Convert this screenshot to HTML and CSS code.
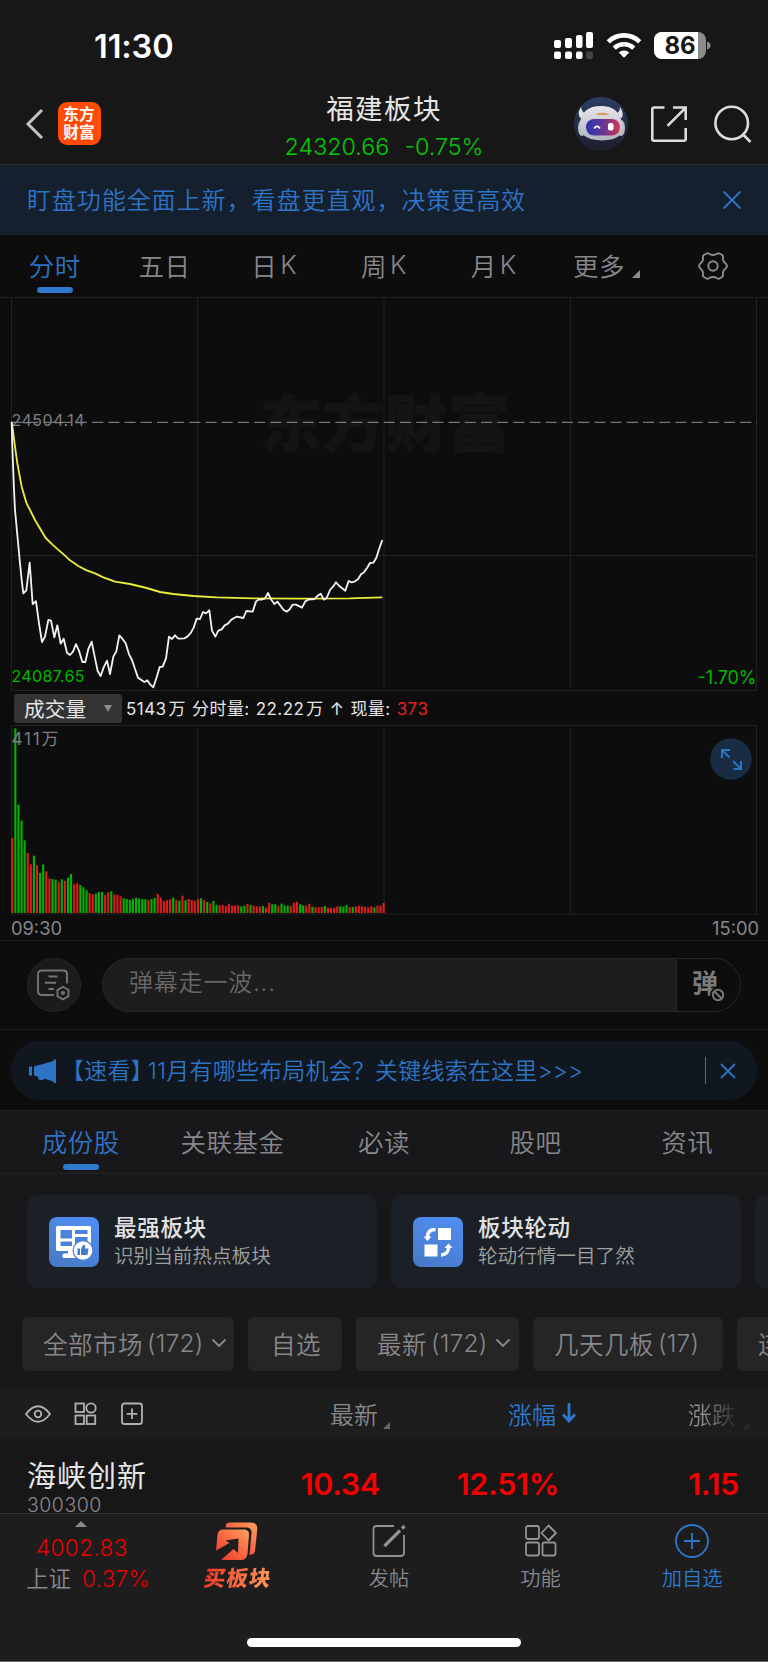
FILE: index.html
```html
<!DOCTYPE html>
<html lang="zh-CN">
<head>
<meta charset="utf-8">
<title>福建板块</title>
<link rel="stylesheet" href="styles.css">
</head>
<body>
<header class="header">
  <div class="status">
    <span class="clock">11:30</span>
    <svg class="status-icons" width="160" height="30" viewBox="0 0 160 30">
      <g fill="#fff">
        <rect x="1" y="9" width="7" height="8" rx="2"/><rect x="12" y="7" width="7" height="10" rx="2"/><rect x="23" y="4" width="6.500" height="13" rx="2"/><rect x="33" y="1" width="7" height="16" rx="2"/>
        <rect x="1" y="20.500" width="7" height="7.500" rx="2"/><rect x="12" y="20.500" width="7" height="7.500" rx="2"/><rect x="23" y="20.500" width="6.500" height="7.500" rx="2"/>
      </g>
      <rect x="33" y="20.500" width="7" height="7.500" rx="2" fill="#444"/>
      <g fill="none" stroke="#fff" stroke-width="4.600"><path d="M55.300 10.800A22.500 22.500 0 0 1 86.700 10.800"/><path d="M61.200 17.200A14 14 0 0 1 80.800 17.200"/></g>
      <path d="M71 26.800L65.800 21.600A7.400 7.400 0 0 1 76.200 21.600Z" fill="#fff"/>
      <rect x="101" y="1" width="52" height="27" rx="8" fill="#8b8b8b"/>
      <path d="M109 1H145V28H109A8 8 0 0 1 101 20V9A8 8 0 0 1 109 1Z" fill="#fff"/>
      <path d="M154 10.500Q157.500 11.500 157.500 14.500T154 18.500Z" fill="#8b8b8b"/>
      <text x="111.500" y="22.500" class="battery-text" textLength="31">86</text>
    </svg>
  </div>
  <div class="nav">
    <div class="nav-left">
      <svg width="20" height="34" viewBox="0 0 20 34"><path d="M17 3L3 17L17 31" fill="none" stroke="#c4c4c4" stroke-width="3"/></svg>
      <div class="logo"><span>东方</span><span>财富</span></div>
    </div>
    <div class="nav-title">
      <h1>福建板块</h1>
      <p><span>24320.66</span><span>-0.75%</span></p>
    </div>
    <div class="nav-right">
      <svg width="54" height="54" viewBox="0 0 54 54">
        <defs>
          <linearGradient id="bot-bg" x1="0" y1="0" x2="0" y2="1"><stop offset="0" stop-color="#2d3d62"/><stop offset="1" stop-color="#1b1f29"/></linearGradient>
          <linearGradient id="bot-head" x1="0" y1="0" x2="0" y2="1"><stop offset="0" stop-color="#e6e7eb"/><stop offset="1" stop-color="#b2b4bd"/></linearGradient>
          <linearGradient id="bot-face" x1="0" y1="0" x2="1" y2="0"><stop offset="0" stop-color="#2b36ad"/><stop offset=".5" stop-color="#663495"/><stop offset="1" stop-color="#d23a55"/></linearGradient>
        </defs>
        <circle cx="27" cy="27" r="27" fill="url(#bot-bg)"/>
        <path d="M7 10Q3 16 6 21L14 18Q8 16 7 10ZM46 10Q50 16 48 21L40 18Q46 16 46 10Z" fill="#e0e0e5"/>
        <ellipse cx="8" cy="31" rx="4" ry="8" fill="#b9bbc5"/><ellipse cx="47" cy="31" rx="4" ry="8" fill="#b9bbc5"/>
        <path d="M6 26Q8 9 27 9Q45 9 48 26Q52 43 28 43.500Q4 43 6 26Z" fill="url(#bot-head)"/>
        <path d="M22 17Q28 14.500 35 17L34 18H23Z" fill="#d79a5e"/>
        <rect x="12" y="22" width="34" height="16.500" rx="8" fill="url(#bot-face)"/>
        <path d="M20 31.500Q23 27 26 31.500" fill="none" stroke="#eee" stroke-width="1.800"/>
        <rect x="34" y="26" width="5.500" height="7.500" rx="2" fill="#fff"/>
      </svg>
      <svg width="38" height="38" viewBox="0 0 38 38" fill="none" stroke="#dcdcdc" stroke-width="2.600"><path d="M14.500 2.500H4Q2.300 2.500 2.300 4V34Q2.300 35.700 4 35.700H34Q35.700 35.700 35.700 34V23M23 2.500H35.700V15M35.500 2.800L17.500 20.800"/></svg>
      <svg width="39" height="39" viewBox="0 0 39 39" fill="none" stroke="#dcdcdc" stroke-width="2.600"><circle cx="18.700" cy="18" r="16.300"/><path d="M29.500 29L37.500 37"/></svg>
    </div>
  </div>
</header>

<div class="notice"><span>盯盘功能全面上新，看盘更直观，决策更高效</span>
  <svg width="20" height="20" viewBox="0 0 20 20"><path d="M1.500 1.500L18.500 18.500M18.500 1.500L1.500 18.500" stroke="#2e74c6" stroke-width="1.800"/></svg>
</div>

<nav class="periods">
  <span class="active">分时</span><span>五日</span><span>日<em>K</em></span><span>周<em>K</em></span><span>月<em>K</em></span>
  <span class="more">更多<i class="corner"></i></span>
  <span class="gear"><svg width="32" height="32" viewBox="0 0 32 32" fill="none" stroke="#8b8b91" stroke-width="1.900"><circle cx="16" cy="16" r="4.700"/><path d="M10 3.300C11.500 2.500 12 5 16 5S20.500 2.500 22 3.300L25.500 5.300C27 6.500 25 8.500 26.500 11S30 14 30 16S28 18.500 26.500 21S27 25.500 25.500 26.700L22 28.700C20.500 29.500 20 27 16 27S11.500 29.500 10 28.700L6.500 26.700C5 25.500 7 23.500 5.500 21S2 18 2 16S4 13.500 5.500 11S5 6.500 6.500 5.300Z"/></svg></span>
</nav>

<section class="charts">
  <svg class="price" width="768" height="394" viewBox="0 0 768 394">
    <text class="watermark" x="260" y="150" textLength="250">东方财富</text>
    <path class="grid" d="M0 .5H768M11.500 0V394M197.500 0V391M384 0V391M570.500 0V391M756.500 0V394M11 258.500H757M11 393.500H757"/>
    <path d="M11 125.300H757" stroke="#77757e" stroke-width="1.300" stroke-dasharray="11 5.200" stroke-dashoffset="16"/>
    <text x="11.500" y="129" class="axis" textLength="73">24504.14</text>
    <text x="11.500" y="385" class="axis down" textLength="73">24087.65</text>
    <text x="697.500" y="387" class="axis down big" textLength="59">-1.70%</text>
    <g transform="translate(0 -7) scale(.33333)" fill="none" stroke-width="5.500" stroke-linejoin="round">
      <path stroke="#ecec3c" d="M36 400L45 470L52 520L65 590L79 638L105 690L117 710L137 744L160 766L195 797L210 811L235 828L260 841L285 850L310 862L345 875L390 882L440 894L480 906L520 912L580 918L650 922L760 925L900 926L1050 925L1147 922"/>
      <path stroke="#f2f2f2" d="M35 395L37 470L42 600L45 660L52 735L60 820L65 870L70 910L79 901L89 818L98 942L108 934L117 1000L126 1056L135 1040L145 990L153 992L163 1042L172 1006L182 1061L191 1046L201 1088L210 1095L219 1085L228 1062L238 1085L247 1116L256 1116L265 1077L275 1055L284 1100L293 1143L302 1158L311 1132L321 1112L330 1152L340 1100L349 1084L358 1036L367 1046L377 1060L387 1093L396 1110L405 1137L414 1163L423 1169L433 1176L442 1171L451 1184L460 1192L470 1162L479 1131L488 1130L498 1105L507 1040L516 1047L525 1036L535 1046L553 1045L562 1040L572 1029L581 1013L590 986L600 987L609 966L618 970L628 961L636 1022L646 1040L655 1022L665 1018L674 1006L684 1001L693 990L702 984L711 980L730 984L739 963L758 965L768 935L776 928L785 929L795 925L804 909L813 928L823 942L832 935L842 948L851 960L860 965L869 958L878 944L888 944L906 953L916 934L925 929L944 927L953 917L962 911L971 929L980 924L990 900L999 890L1008 877L1017 887L1036 902L1046 873L1055 877L1065 874L1074 868L1083 853L1092 847L1101 834L1110 819L1120 818L1129 803L1138 775L1147 750"/>
    </g>
  </svg>
  <div class="volume-head">
    <div class="select">成交量<i></i></div>
    <p><span>5143<em>万</em></span><span>分时量:</span><span>22.22<em>万</em></span><span>↑</span><span>现量:</span><b>373</b></p>
  </div>
  <div class="volume">
    <svg width="768" height="190" viewBox="0 0 768 190">
      <path class="grid" d="M11 .5H757M11.500 0V190M197.500 3V188M384 3V188M570.500 3V188M756.500 0V190M11 189H757"/>
      <g id="bars"></g>
      <text x="11.500" y="20" class="axis vol" textLength="47">411万</text>
    </svg>
    <svg class="expand" width="42" height="42" viewBox="0 0 42 42"><circle cx="21" cy="21" r="20.800" fill="#182c44"/><path d="M20 12H12V20M12 12L19.500 19.500M23.500 31H31V23M31 31L23 23" fill="none" stroke="#2c74c8" stroke-width="2"/></svg>
  </div>
  <div class="times"><span>09:30</span><span>15:00</span></div>
</section>

<section class="comment">
  <div class="round"><svg width="36" height="34" viewBox="0 0 36 34" fill="none" stroke="#747474" stroke-width="1.900"><path d="M18 27H6Q2 27 2 23V6Q2 2.500 6 2.500H27Q31 2.500 31 6V15.500M12.500 8.500H21.500M9 14.800H20M12.500 21H18"/><path d="M27 18.800L32.500 22V28.200L27 31.400L21.500 28.200V22Z"/><circle cx="27" cy="25" r="1.100" fill="#747474"/></svg></div>
  <div class="input"><span>弹幕走一波...</span><div class="bullet">弹<svg width="16" height="16" viewBox="0 0 16 16"><circle cx="8" cy="8" r="8" fill="#0d0d0d"/><circle cx="8" cy="8" r="5.200" fill="none" stroke="#797979" stroke-width="2"/><path d="M4.500 4.500L11.500 11.500" stroke="#797979" stroke-width="1.900"/></svg></div></div>
</section>

<section class="news"><div class="news-pill">
  <svg width="28" height="26" viewBox="0 0 28 26" fill="#2e74c6"><path d="M0 8.500H3V17.500H0ZM5 8.500L24.500 3V1.500H27V25H24.500V23.500L15 20.500Q14.500 22.500 12.500 22H10.500Q9 21.500 9 18.500L5 17.500Z"/></svg>
  <span><em>【速看】</em>11月有哪些布局机会？关键线索在这里&gt;&gt;&gt;</span>
  <i></i>
  <svg class="x" width="16" height="16" viewBox="0 0 16 16"><path d="M1 1L15 15M15 1L1 15" stroke="#2e74c6" stroke-width="1.800"/></svg>
</div></section>

<main class="list">
  <nav class="tabs"><span class="active">成份股</span><span>关联基金</span><span>必读</span><span>股吧</span><span>资讯</span></nav>
  <div class="cards">
    <article class="card">
      <svg width="50" height="50" viewBox="0 0 50 50"><defs><linearGradient id="tile" x1=".7" y1="0" x2=".3" y2="1"><stop offset="0" stop-color="#4f8df0"/><stop offset="1" stop-color="#477bc9"/></linearGradient></defs><rect width="50" height="50" rx="8" fill="url(#tile)"/><rect x="7" y="9" width="35" height="25" rx="1.500" fill="#fff"/><path d="M11.500 13H23V21.500H11.500ZM26 13H38.500V17H26ZM26 20H38.500V28H26ZM11.500 24.500H23V29H11.500Z" fill="#4a83dc"/><path d="M19 34H26V37H19Z" fill="#fff"/><rect x="13.500" y="36.500" width="17" height="4.500" rx="1.500" fill="#fff"/><circle cx="34" cy="33.500" r="10.500" fill="#4a83dc"/><circle cx="34" cy="33.500" r="9.300" fill="#fff"/><path d="M28.500 31.500H31V38H28.500ZM32 31.500L34.500 27.500Q37 28 36 31.500H39.500L38.500 38H32Z" fill="#447bd3"/></svg>
      <div><h2>最强板块</h2><p>识别当前热点板块</p></div>
    </article>
    <article class="card">
      <svg width="50" height="50" viewBox="0 0 50 50"><rect width="50" height="50" rx="8" fill="url(#tile)"/><path d="M25 11H38V23H25ZM11.500 27.500H24.500V39.500H11.500Z" fill="#fff"/><path d="M22.500 12.500Q14.500 12.500 14.500 20M28 38Q35.500 37.500 35.500 30" fill="none" stroke="#fff" stroke-width="3.300"/><path d="M10.500 19.500H18.500L14.500 24ZM31.500 31H39.500L35.500 26.500Z" fill="#fff"/></svg>
      <div><h2>板块轮动</h2><p>轮动行情一目了然</p></div>
    </article>
    <article class="card"></article>
  </div>
  <div class="chips">
    <span class="chip wide">全部市场<em>(172)</em><svg width="16" height="10" viewBox="0 0 16 10"><path d="M1.500 1.500L8 8L14.500 1.500"/></svg></span>
    <span class="chip own">自选</span>
    <span class="chip latest">最新<em>(172)</em><svg width="16" height="10" viewBox="0 0 16 10"><path d="M1.500 1.500L8 8L14.500 1.500"/></svg></span>
    <span class="chip boards">几天几板<em>(17)</em></span>
    <span class="chip last">连</span>
  </div>
  <div class="thead">
    <div class="tools">
      <svg width="26" height="24" viewBox="0 0 26 24"><path d="M1 12Q13-3.500 25 12Q13 27.500 1 12Z"/><circle cx="13" cy="12" r="3.300"/></svg>
      <svg width="23" height="24" viewBox="0 0 23 24"><rect x="1.500" y="1.500" width="8.500" height="8.500"/><circle cx="17" cy="6" r="4.700"/><rect x="1.500" y="13.500" width="8.500" height="8.500"/><rect x="12.700" y="13.500" width="8.500" height="8.500"/></svg>
      <svg width="24" height="24" viewBox="0 0 24 24"><rect x="2" y="1.500" width="20" height="20.500" rx="2.500"/><path d="M12 6.500V17M6.700 11.800H17.300"/></svg>
    </div>
    <span class="h1">最新<i class="corner small"></i></span>
    <span class="h2">涨幅<svg width="14" height="20" viewBox="0 0 14 20"><path d="M7 0V16M1 11.500L7 18L13 11.500" fill="none" stroke="#2e78cd" stroke-width="2.800"/></svg></span>
    <span class="h3">涨跌</span><i class="corner small faint"></i>
  </div>
  <div class="row">
    <div class="stock"><b>海峡创新</b><small>300300</small></div>
    <span class="n">10.34</span><span class="n">12.51%</span><span class="n">1.15</span>
  </div>
</main>

<footer class="bottom">
  <div class="actions">
    <div class="index"><i></i><b>4002.83</b><p>上证<span>0.37%</span></p></div>
    <div class="buy">
      <svg width="44" height="40" viewBox="0 0 44 40"><defs><linearGradient id="hot" x1="0" y1="1" x2="1" y2="0"><stop offset="0" stop-color="#ee3028"/><stop offset="1" stop-color="#ffa15c"/></linearGradient></defs><path d="M11 4Q11.500 1.500 15 1.500H36Q42.500 1.500 42.300 8L40 30Q39.500 33.500 34.500 34L36.500 12Q37 6.500 31 6.500H11Q10.500 6.500 11 4Z" fill="url(#hot)"/><path d="M8 8.500H28.500Q34.500 8.500 34 14L32.500 33Q31.500 39 26 39H6L18.500 28L23 32L23.500 17.500L10.500 19.500L14.500 22L1 29.500L2.500 14Q3 8.500 8 8.500Z" fill="url(#hot)"/></svg>
      <span>买板块</span>
    </div>
    <div><svg width="34" height="34" viewBox="0 0 34 34"><path d="M22 2H4.500Q1.500 2 1.500 5V29Q1.500 32 4.500 32H28.500Q32 32 32 29V11"/><path d="M12.500 22L28 6.500M30 4.500L32.500 2" stroke-width="3.200"/></svg><span>发帖</span></div>
    <div><svg width="34" height="34" viewBox="0 0 34 34"><rect x="2" y="2" width="13" height="13" rx="2"/><path d="M24.500 1.500L32 9L24.500 16.500L17.500 9Z" stroke-linejoin="round"/><rect x="2" y="18.500" width="13" height="13" rx="2"/><rect x="18.500" y="18.500" width="13" height="13" rx="2"/></svg><span>功能</span></div>
    <div class="add"><svg width="34" height="34" viewBox="0 0 34 34"><circle cx="17" cy="17" r="16"/><path d="M17 9V25M9 17H25"/></svg><span>加自选</span></div>
  </div>
  <div class="home"></div>
</footer>
<script src="chart.js"></script>
</body>
</html>
```
FILE: styles.css
```css
* { box-sizing: border-box; }
body { margin: 0; width: 768px; height: 1662px; overflow: hidden; background: #0d0d0d; color: #87878d; font-family: Inter, "Noto Sans CJK SC", sans-serif; font-weight: 350; display: flex; flex-direction: column; }
h1, h2, p { margin: 0; font-weight: 350; }
i, em { font-style: normal; }
svg { display: block; flex: none; }
span, b, small { white-space: nowrap; }

.header { height: 165px; background: #171717; border-bottom: 1px solid #2a2a2a; }
.status { height: 90px; display: flex; justify-content: space-between; padding: 29px 55px 0 94px; }
.clock { color: #fff; font-weight: 600; font-size: 32.500px; line-height: 36px; letter-spacing: -.1px; }
.status-icons { margin-top: 2px; }
.battery-text { font-size: 24px; font-weight: 700; fill: #171717; }
.nav { height: 74px; display: grid; grid-template-columns: 1fr 240px 1fr; }
.nav-left { display: flex; align-items: center; gap: 12.500px; padding: 0 0 7px 25px; }
.logo { width: 43px; height: 43px; border-radius: 9px; background: #ff4b05; color: #fff; display: flex; flex-direction: column; align-items: center; justify-content: center; font-size: 15.700px; line-height: 17.500px; font-weight: 700; }
.nav-title { text-align: center; padding-top: 1px; }
.nav-title h1 { font-size: 27.500px; letter-spacing: 1.400px; line-height: 36px; color: #e6e6e6; font-weight: 400; }
.nav-title p { display: flex; justify-content: center; gap: 15px; font-size: 23.300px; line-height: 30px; margin-top: 5px; color: #00cb00; }
.nav-right { display: flex; align-items: flex-start; gap: 22px; padding: 7px 0 0 70px; }
.nav-right svg + svg { margin-top: 8px; }
.nav-right svg:last-child { margin-left: 3px; }

.notice { height: 70px; padding: 0 26px 0 27px; background: #15202e; display: flex; align-items: center; justify-content: space-between; color: #2e74c6; font-size: 23.800px; letter-spacing: 1.170px; }
.notice span { padding-bottom: 3px; }

.periods { height: 62px; display: grid; grid-template-columns: repeat(7, 1fr); font-size: 25.500px; }
.periods > span, .tabs > span { position: relative; display: flex; align-items: center; justify-content: center; letter-spacing: .500px; padding-bottom: 4px; }
.periods .gear { padding-bottom: 1px; }
.periods em { margin-left: 3px; }
.active { color: #2e74c6; }
.active::after { content: ""; position: absolute; left: 50%; bottom: 4px; width: 36px; height: 6px; margin-left: -18px; border-radius: 3px; background: #2e78cd; }
.periods .more { gap: 7px; padding-left: 6px; }
.corner { width: 0; height: 0; border-left: 8px solid transparent; border-bottom: 8px solid #8b8b91; margin-top: 20px; }
.corner.small { border-left-width: 7px; border-bottom-width: 7px; border-bottom-color: #666; margin-top: 24px; }
.corner.faint { border-bottom-color: #292929; margin-left: 6px; }

.charts { height: 644px; border-bottom: 1px solid #1c1c1c; }
.grid { fill: none; stroke: #212121; stroke-width: 1; }
.axis { font-size: 16px; fill: #7d7d82; font-weight: 400; }
.axis.vol { font-size: 17px; }
.axis.big { font-size: 18px; }
.axis.down { fill: #00b800; }
.watermark { font-size: 62px; font-weight: 900; fill: #141414; stroke: #141414; stroke-width: 1; }
.volume-head { height: 34px; display: flex; align-items: center; padding: 1px 0 0 14px; color: #e5e5e5; font-weight: 400; }
.select { width: 108px; height: 29px; background: #333; border-radius: 3px; display: flex; align-items: center; justify-content: space-between; padding: 0 10px 1px 10px; font-size: 20.700px; }
.select i { border: 4px solid transparent; border-top: 7px solid #8b8b91; border-bottom: 0; }
.volume-head p { display: flex; align-items: center; font-size: 17px; letter-spacing: .450px; line-height: 30px; margin-left: 4px; gap: 6px; font-weight: 400; }
.volume-head em { margin-left: 2px; }
.volume-head b { color: #ea2020; font-weight: 400; }
.volume { position: relative; height: 190px; }
.expand { position: absolute; right: 16px; top: 13px; }
.times { display: flex; justify-content: space-between; padding: 0 9px 0 11px; font-size: 18.300px; line-height: 26px; font-weight: 400; }

.comment { height: 89px; display: flex; padding: 17px 27px 0; gap: 21px; border-bottom: 1px solid #1c1c1c; }
.round { width: 54px; height: 54px; border-radius: 50%; background: #1b1b1b; border: 1px solid #262626; display: grid; place-items: center; }
.input { width: 639px; height: 54px; border: 1px solid #262626; border-radius: 27px; background: #1d1d1d; display: flex; overflow: hidden; justify-content: space-between; padding-left: 26px; font-size: 24px; letter-spacing: .800px; line-height: 48px; color: #686868; }
.bullet { position: relative; width: 64px; background: #0d0d0d; border-left: 1px solid #262626; font-size: 26px; font-weight: 700; color: #797979; padding-left: 15px; line-height: 50px; }
.bullet svg { position: absolute; left: 33px; top: 28px; }

.news { height: 80px; padding: 11px; }
.news-pill { height: 59px; border-radius: 28px; background: #10171f; display: flex; align-items: center; padding: 0 21px 0 18px; color: #2e74c6; }
.news-pill span { font-size: 23px; letter-spacing: .200px; margin-left: 4px; flex: 1; padding-bottom: 3px; }
.news-pill em { margin-right: -6px; }
.news-pill i { width: 1.500px; height: 27px; background: #2e74c6; margin-right: 14px; }

.list { background: #18181a; height: 403px; overflow: hidden; }
.tabs { height: 64px; border-top: 1px solid #222; border-bottom: 1px solid #222224; padding: 0 5px; display: grid; grid-template-columns: repeat(5, 1fr); font-size: 25.500px; }
.tabs .active::after { bottom: 3px; }
.cards { display: flex; gap: 14px; padding: 21px 0 0 27px; overflow: hidden; }
.card { flex: none; width: 350px; height: 93px; background: #1b2027; border-radius: 10px; padding: 0 22px; display: flex; align-items: center; gap: 15px; }
.card h2 { font-size: 22.500px; letter-spacing: .700px; font-weight: 500; color: #e2e2e2; line-height: 28px; padding-top: 1px; }
.card p { font-size: 19.600px; line-height: 29px; color: #a0a0a0; }
.chips { display: flex; gap: 14px; padding: 29px 0 18px 22px; height: 101px; overflow: hidden; font-size: 24.500px; }
.chip { flex: none; height: 54px; border-radius: 6px; background: #252525; display: flex; align-items: center; padding: 0 0 2px 21px; letter-spacing: .500px; }
.chip em { margin-left: 4px; letter-spacing: .200px; }
.chip svg, .tools svg { fill: none; stroke: #8b8b91; stroke-width: 1.800; }
.chip svg { margin-left: 8px; }
.wide { width: 212px; } .own { width: 94px; padding-left: 23px; } .latest { width: 163px; } .boards { width: 190px; } .last { width: 80px; }
.thead { height: 50px; background: #1d1d1d; display: flex; align-items: center; font-size: 24px; padding-bottom: 2px; }
.tools { width: 330px; display: flex; gap: 23px; padding: 2px 0 0 25px; }
.tools svg { stroke: #b1b1b1; }
.h1, .h2 { display: flex; align-items: center; gap: 5px; }
.h1 { width: 178px; } .h2 { width: 180px; color: #2e78cd; gap: 6px; }
.h3 { background: linear-gradient(90deg, #8b8b91 35%, #292929); background-clip: text; -webkit-background-clip: text; color: transparent; }
.row { height: 74px; background: #171717; display: grid; grid-template-columns: 231px 149px 179px 180px; padding-top: 20px; }
.stock { display: flex; flex-direction: column; padding-left: 27px; }
.stock b { color: #e6e6e6; font-weight: 400; font-size: 29px; line-height: 36px; letter-spacing: 1px; }
.stock small { font-size: 19.500px; line-height: 16px; letter-spacing: .500px; margin-top: 2px; }
.n { color: #f50000; font-size: 30.500px; line-height: 50px; font-weight: 600; text-align: right; letter-spacing: -.3px; }

.bottom { height: 149px; background: #1d1d1d; border-top: 1px solid #313131; border-bottom: 1px solid #666; }
.actions { padding-left: 10px; display: grid; grid-template-columns: repeat(5, 1fr); height: 124px; }
.actions > div { display: flex; flex-direction: column; align-items: center; padding-top: 10px; font-size: 20.300px; }
.actions svg { fill: none; stroke: #929298; stroke-width: 1.800; }
.actions > div > span { line-height: 28px; margin-top: 7px; }
.actions .index { align-items: flex-start; padding: 7px 0 0 16px; }
.index i { margin-left: 49px; border: 6px solid transparent; border-top: 0; border-bottom: 6px solid #8b8b91; }
.index b { margin-left: 10px; font-size: 22.500px; line-height: 29px; font-weight: 350; color: #e90000; margin-top: 6px; letter-spacing: .400px; }
.index p { font-size: 22.500px; line-height: 34px; display: flex; gap: 11px; }
.index p span { color: #e90000; letter-spacing: .300px; }
.actions .buy { padding-top: 7px; }
.actions .buy svg { stroke: none; }
.actions .buy span { font-size: 21.500px; font-weight: 900; background: linear-gradient(90deg, #f0362b, #ff9b57); background-clip: text; -webkit-background-clip: text; color: transparent; transform: skewX(-8deg); margin-top: 3px; letter-spacing: 1px; }
.actions .add { color: #2e78cd; }
.actions .add svg { stroke: #2e78cd; }
.home { width: 274px; height: 9px; margin: 0 auto; border-radius: 5px; background: #fff; }
```
FILE: chart.js
```javascript
// Minute volume: direction letter (r = up, g = down) and bar height.
const minutes = "r225 g554 g325 g277 g218 r180 r146 g172 r143 g120 g146 r125 r104 g102 g100 r93 g101 r97 g106 g117 r86 r89 g84 g77 g68 r60 r56 g58 g63 g63 r54 r62 g65 r56 r54 r50 g44 g42 g39 g43 g46 g43 g41 g41 r39 g42 g45 r57 r46 r36 r38 r41 g46 r39 g37 r52 g38 r42 r39 r36 r42 g44 r38 g33 r29 g36 g24 r23 r24 r21 r28 r22 r23 r23 g20 g22 r27 g24 r22 r20 r20 g21 r16 r31 g26 g26 r21 g28 g23 g22 r21 r31 r34 g26 g23 r22 r28 g19 r17 r18 r18 g21 r16 r15 r16 r20 g20 g19 g24 r18 g18 r20 r22 r20 r18 r17 r20 g17 r22 r22 r30".split(" ");
const group = document.getElementById("bars");
minutes.forEach((item, i) => {
  const height = Number(item.slice(1)) / 3;
  const bar = document.createElementNS("http://www.w3.org/2000/svg", "rect");
  bar.setAttribute("x", 11.2 + i * 3.095);
  bar.setAttribute("y", 188 - height);
  bar.setAttribute("width", 2.1);
  bar.setAttribute("height", height);
  bar.setAttribute("fill", item[0] === "r" ? "#de1c1c" : "#00b400");
  group.appendChild(bar);
});
```
